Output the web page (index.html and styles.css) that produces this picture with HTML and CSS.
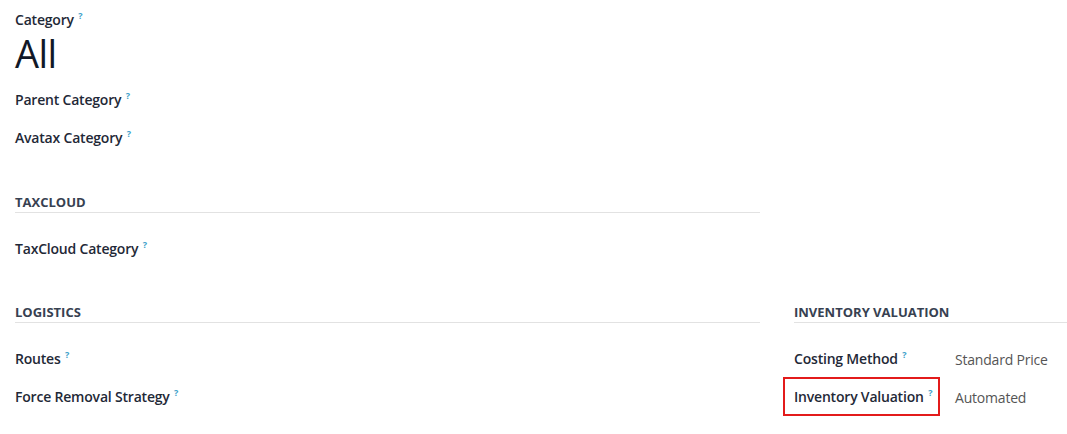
FILE: index.html
```html
<!DOCTYPE html>
<html lang="en">
<head>
  <meta charset="UTF-8" />
  <title>Product Category</title>
  <link rel="stylesheet" href="styles.css">
</head>
<body>

  <div class="sheet">
    <div class="title-block">
      <div class="field-label">Category <sup class="tip">?</sup></div>
      <h1 class="title">All</h1>
    </div>

    <div class="main-group">
      <div class="field-row">
        <span class="field-label">Parent Category <sup class="tip">?</sup></span>
      </div>
      <div class="field-row">
        <span class="field-label">Avatax Category <sup class="tip">?</sup></span>
      </div>
    </div>

    <div class="groups">
      <div class="group">
        <div class="group-title">TaxCloud</div>
        <div class="field-row">
          <span class="field-label">TaxCloud Category <sup class="tip">?</sup></span>
        </div>
      </div>
      <div></div>

      <div class="group">
        <div class="group-title">Logistics</div>
        <div class="field-row">
          <span class="field-label">Routes <sup class="tip">?</sup></span>
        </div>
        <div class="field-row">
          <span class="field-label">Force Removal Strategy <sup class="tip">?</sup></span>
        </div>
      </div>

      <div class="group">
        <div class="group-title">Inventory Valuation</div>
        <div class="field-row">
          <div class="label-cell">
            <span class="field-label">Costing Method <sup class="tip">?</sup></span>
          </div>
          <span class="field-value">Standard Price</span>
        </div>
        <div class="field-row">
          <div class="label-cell">
            <span class="field-label highlight">Inventory Valuation <sup class="tip">?</sup></span>
          </div>
          <span class="field-value">Automated</span>
        </div>
      </div>
    </div>
  </div>

</body>
</html>
```

FILE: styles.css
```css
body {
  margin: 0;
  font-family: "Open Sans", "Noto Sans", sans-serif;
  font-size: 14px;
  color: #212529;
  background: #fff;
}

.sheet {
  padding: 10px 0 0 15px;
}

.title-block {
  margin-bottom: 7px;
}

.field-label {
  font-weight: 600;
  line-height: 20px;
  color: #1f2937;
  letter-spacing: -0.2px;
}

.tip {
  font-size: 9px;
  font-weight: 700;
  color: #3e9fc9;
  vertical-align: top;
  position: relative;
  top: -4px;
  margin-left: 1px;
}

.title {
  margin: 2px 0 0;
  font-size: 38px;
  font-weight: 400;
  line-height: 42px;
  color: #111827;
  letter-spacing: -0.5px;
}

.field-row {
  display: flex;
  align-items: center;
  height: 38px;
}

.groups {
  display: grid;
  grid-template-columns: 745px 1fr;
  column-gap: 34px;
  margin-top: 36px;
  row-gap: 35px;
}

.group-title {
  font-size: 13px;
  font-weight: 700;
  text-transform: uppercase;
  color: #374151;
  line-height: 19px;
  border-bottom: 1px solid #e2e2e2;
  margin-bottom: 17px;
}

.label-cell {
  width: 161px;
  flex-shrink: 0;
}

.field-value {
  color: #555;
  letter-spacing: -0.2px;
}

.highlight {
  position: relative;
}

.highlight::after {
  content: "";
  position: absolute;
  left: -11px;
  right: -8px;
  top: -10px;
  bottom: -10px;
  border: 2px solid #e31b1b;
}
```
